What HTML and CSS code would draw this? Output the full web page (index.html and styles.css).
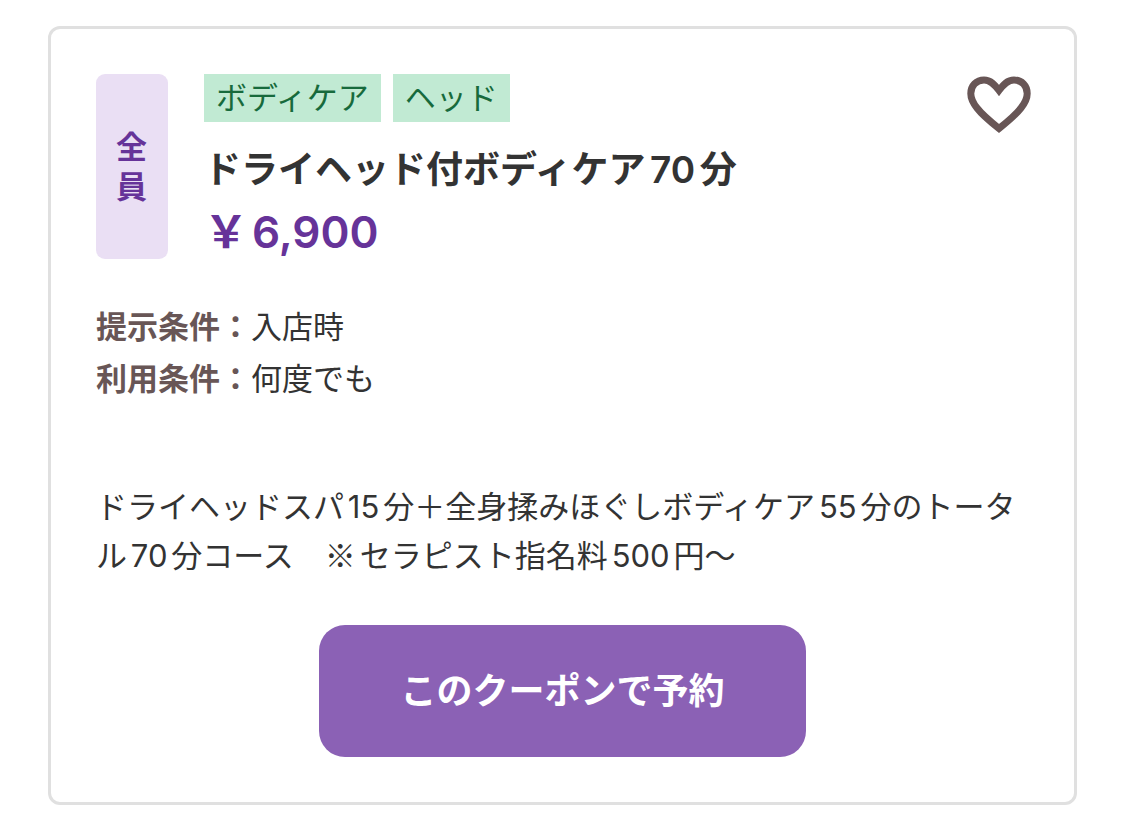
FILE: index.html
```
<!DOCTYPE html>
<html lang="ja">
<head>
    <meta charset="UTF-8">
    <meta name="viewport" content="width=device-width, initial-scale=1">
    <title>クーポン</title>
    <link rel="stylesheet" href="styles.css">
</head>
<body>
    <article class="coupon">
        <div class="coupon-head">
            <span class="target">全員</span>
            <div class="summary">
                <ul class="tags">
                    <li>ボディケア</li>
                    <li>ヘッド</li>
                </ul>
                <h2 class="title">ドライヘッド付ボディケア70分</h2>
                <p class="price"><span class="yen">￥</span>6,900</p>
            </div>
            <button type="button" class="fav" aria-label="お気に入り">
                <svg viewBox="0 0 64 58" width="64" height="58">
                    <path d="M32 52.500C22 44.500 15 38.500 10 32C6 27 3.800 22.500 3.800 17.500C3.800 9.500 9.500 4 17 4C23.500 4 27.500 8.500 32 14.500C36.500 8.500 40.500 4 47 4C54.500 4 60.200 9.500 60.200 17.500C60.200 22.500 58 27 54 32C49 38.500 42 44.500 32 52.500Z"/>
                </svg>
            </button>
        </div>
        <dl class="terms">
            <div><dt>提示条件：</dt><dd>入店時</dd></div>
            <div><dt>利用条件：</dt><dd>何度でも</dd></div>
        </dl>
        <p class="desc">ドライヘッドスパ15分＋全身揉みほぐしボディケア55分のトータル70分コース　<span class="mark">※</span>セラピスト指名料500円〜</p>
        <button type="button" class="reserve">このクーポンで予約</button>
    </article>
</body>
</html>
```
FILE: styles.css
```
* {
    margin: 0;
    padding: 0;
    box-sizing: border-box;
}
body {
    padding: 26px 48px 32px;
    background: #fff;
    color: #333;
    font-family: Inter, "Noto Sans CJK JP", sans-serif;
    font-size: 31px;
    text-autospace: normal;
}
button {
    border: none;
    background: none;
    font-family: inherit;
    cursor: pointer;
}
.coupon {
    display: flex;
    flex-direction: column;
    padding: 45px;
    border: 3px solid #e0e0e0;
    border-radius: 12px;
}
.coupon-head {
    display: flex;
    align-items: flex-start;
}
.target {
    display: flex;
    align-self: stretch;
    align-items: center;
    justify-content: center;
    width: 72px;
    padding: 0 20px;
    border-radius: 9px;
    background: #eadff4;
    color: #663399;
    font-weight: 600;
    line-height: 40px;
    word-break: break-all;
}
.summary {
    flex: 1;
    margin-left: 36px;
}
.tags {
    display: flex;
    gap: 12px;
    list-style: none;
}
.tags li {
    padding: 0 12px;
    background: #c1ead3;
    color: #176a3c;
    line-height: 48px;
}
.title {
    margin-top: 18px;
    font-size: 37px;
    font-weight: 600;
    line-height: 60px;
}
.price {
    margin-top: 6px;
    color: #663399;
    font-size: 44px;
    font-weight: 600;
    line-height: 53px;
}
.yen {
    margin-right: 4px;
}
.fav {
    margin: 2px -2px 0 0;
}
.fav svg {
    display: block;
    fill: none;
    stroke: #685656;
    stroke-width: 7;
}
.terms {
    margin-top: 42px;
    line-height: 52px;
}
.terms div {
    display: flex;
}
.terms dt {
    color: #685656;
    font-weight: 600;
}
.desc {
    margin-top: 77px;
    line-height: 49px;
}
.mark {
    margin-right: 4px;
    font-family: "Noto Sans CJK JP", sans-serif;
    line-height: 1;
}
.reserve {
    align-self: center;
    width: 487px;
    max-width: 100%;
    margin-top: 45px;
    border-radius: 26px;
    background: #8b61b5;
    color: #fff;
    font-size: 36px;
    font-weight: 600;
    line-height: 132px;
}
```
